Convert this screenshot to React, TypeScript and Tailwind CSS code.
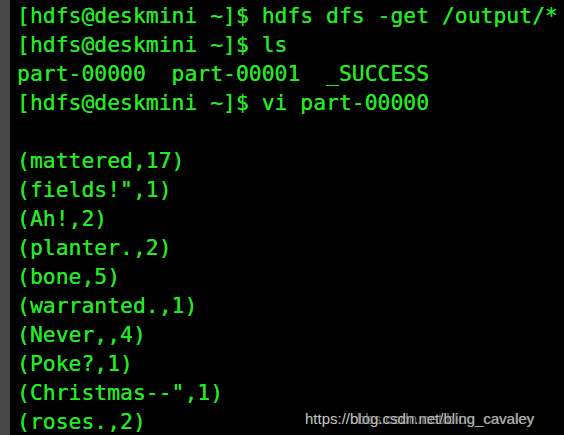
import React from "react";

const lines = [
  "[hdfs@deskmini ~]$ hdfs dfs -get /output/*",
  "[hdfs@deskmini ~]$ ls",
  "part-00000  part-00001  _SUCCESS",
  "[hdfs@deskmini ~]$ vi part-00000",
  "",
  "(mattered,17)",
  '(fields!",1)',
  "(Ah!,2)",
  "(planter.,2)",
  "(bone,5)",
  "(warranted.,1)",
  "(Never,,4)",
  "(Poke?,1)",
  '(Christmas--",1)',
  "(roses.,2)",
];

export default function App() {
  return (
    <div className="relative flex w-[564px] h-[435px] overflow-hidden bg-black">
      <div className="w-[10px] h-full bg-[#474747] shrink-0" />
      <div
        className="pl-[7px] pt-[1px] text-[21.4px] leading-[29px] text-[#22ec22] whitespace-pre [text-shadow:0_0_0.4px_#22ec22]"
        style={{ fontFamily: '"DejaVu Sans Mono", monospace' }}
      >
        {lines.map((l, i) => (
          <div key={i} className="h-[29px]">
            {l}
          </div>
        ))}
      </div>
      <div
        className="absolute left-[305px] top-[410px] text-[15px] leading-[18px] text-[#c8c8c8] whitespace-nowrap"
        style={{ fontFamily: '"Liberation Sans", Arial, sans-serif' }}
      >
        <span className="relative">
          https://blog.csdn.net/bling_cavaley
          <span className="absolute left-[52px] top-0 opacity-70 text-[#9a9a9a]">bbs.csdn.net/blog_cavaley</span>
        </span>
      </div>
    </div>
  );
}
